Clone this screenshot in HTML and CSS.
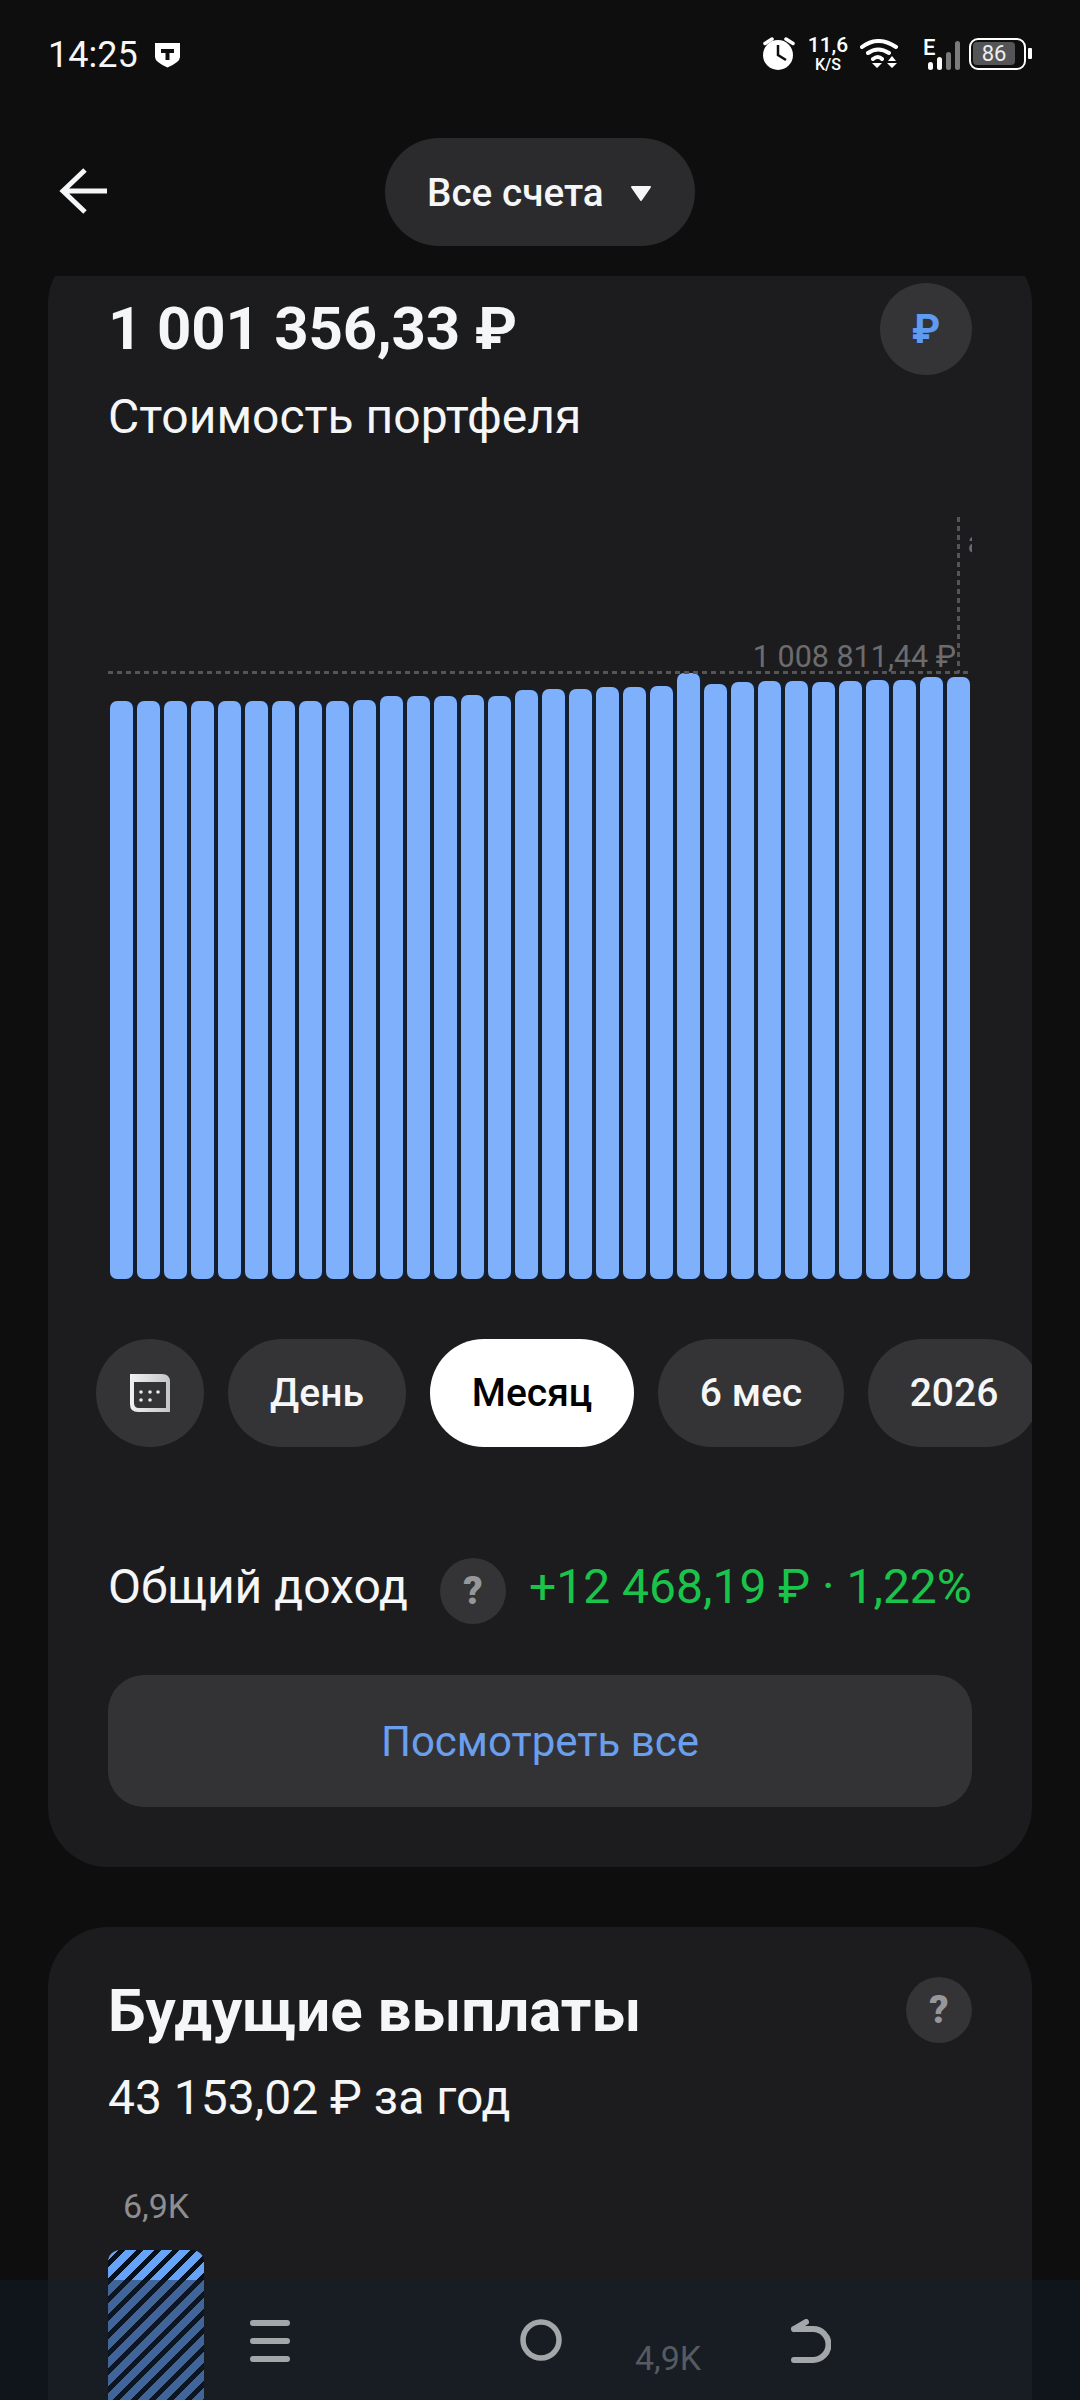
FILE: index.html
```html
<!DOCTYPE html>
<html lang="ru">
<head>
<meta charset="utf-8">
<title>Портфель</title>
<link rel="stylesheet" href="styles.css">
</head>
<body>
<div class="screen">
  <div class="statusbar">
    <div class="status-left">
      <span class="time">14:25</span>
      <svg class="shield" width="25" height="26" viewBox="0 0 25 26"><path fill="#fff" d="M0 1H25V15Q25 20 12.500 25.500Q0 20 0 15Z"/><path fill="#0e0e0f" d="M6 7H19V11H14.500V18H10.500V11H6Z"/></svg>
    </div>
    <div class="status-right">
      <svg width="34" height="34" viewBox="0 0 34 34"><circle cx="16" cy="18" r="15" fill="#fff"/><path d="M16 8V18L24 23" stroke="#0e0e0f" stroke-width="2.500" fill="none"/><path d="M3 6.500L10 2M24 2L31 6.500" stroke="#fff" stroke-width="3.500" stroke-linecap="round"/></svg>
      <div class="speed"><span class="speed-num">11,6</span><span class="speed-unit">K/S</span></div>
      <svg width="38" height="30" viewBox="0 0 38 30"><path d="M2 8Q18 -4 36 8M8 14Q18 7 29 14M13 20Q18 16 22 20" stroke="#fff" stroke-width="4" fill="none" stroke-linecap="round"/><path fill="#fff" d="M12 24H22L17 29ZM28 22L32 17L36 22ZM27 24H37L32 29Z"/></svg>
      <div class="signal">
        <span class="signal-e">E</span>
        <i class="sbar s1"></i><i class="sbar s2"></i><i class="sbar s3 dim"></i><i class="sbar s4 dim"></i>
      </div>
      <div class="battery"><span class="battery-fill">86</span></div>
      <i class="battery-cap"></i>
    </div>
  </div>

  <div class="appbar">
    <svg class="back" width="50" height="50" viewBox="0 0 50 50"><path d="M48 25H5M26 4L4 25L26 46" stroke="#f5f6f7" stroke-width="5" fill="none"/></svg>
    <div class="account-pill"><span>Все счета</span><svg class="pill-caret" width="22" height="17" viewBox="0 0 22 17"><path fill="#f5f6f7" stroke="#f5f6f7" stroke-width="2" stroke-linejoin="round" d="M2 2H20L11 15Z"/></svg></div>
  </div>

  <div class="scroller">
    <section class="card card-portfolio">
      <div class="head-row">
        <div class="amount">1 001 356,33 ₽</div>
        <div class="currency">₽</div>
      </div>
      <div class="caption">Стоимость портфеля</div>

      <div class="chart">
        <span class="cut-letter">а</span>
        <span class="vline"></span>
        <span class="max-label">1 008 811,44 ₽</span>
        <span class="hline"></span>
        <div class="bars">
          <i style="height:578px"></i><i style="height:578px"></i><i style="height:578px"></i><i style="height:578px"></i>
          <i style="height:578px"></i><i style="height:578px"></i><i style="height:578px"></i><i style="height:578px"></i>
          <i style="height:578px"></i><i style="height:579px"></i><i style="height:583px"></i><i style="height:583px"></i>
          <i style="height:583px"></i><i style="height:584px"></i><i style="height:583px"></i><i style="height:589px"></i>
          <i style="height:590px"></i><i style="height:590px"></i><i style="height:592px"></i><i style="height:592px"></i>
          <i style="height:593px"></i><i style="height:606px"></i><i style="height:595px"></i><i style="height:597px"></i>
          <i style="height:598px"></i><i style="height:598px"></i><i style="height:597px"></i><i style="height:598px"></i>
          <i style="height:599px"></i><i style="height:599px"></i><i style="height:602px"></i><i style="height:602px"></i>
        </div>
      </div>

      <div class="chips">
        <div class="chip chip-icon">
          <svg width="40" height="38" viewBox="0 0 40 38"><defs><linearGradient id="calTop" x1="0" x2="1" y1="0" y2="0"><stop offset="0" stop-color="#f0f1f2"/><stop offset="1" stop-color="#c4c5c7"/></linearGradient></defs><path fill="url(#calTop)" d="M0 0H32Q40 0 40 8V38H8Q0 38 0 30Z"/><path fill="#343436" d="M4 8H36V34H9Q4 34 4 29Z"/><g fill="#e8e9ea"><circle cx="11" cy="18" r="1.800"/><circle cx="20" cy="18" r="1.800"/><circle cx="28" cy="18" r="1.800"/><circle cx="11" cy="26" r="1.800"/><circle cx="20" cy="26" r="1.800"/></g></svg>
        </div>
        <div class="chip chip-day">День</div>
        <div class="chip chip-active">Месяц</div>
        <div class="chip chip-half">6 мес</div>
        <div class="chip chip-year">2026</div>
      </div>

      <div class="income-row">
        <span class="income-label">Общий доход</span>
        <span class="help">?</span>
        <span class="income-value">+12 468,19 ₽ · 1,22%</span>
      </div>
      <div class="see-all">Посмотреть все</div>
    </section>

    <section class="card card-future">
      <div class="future-head">
        <h2 class="future-title">Будущие выплаты</h2>
        <span class="help">?</span>
      </div>
      <div class="future-sub">43 153,02 ₽ за год</div>
      <div class="payouts">
        <div class="payout payout-tall">
          <span class="payout-label">6,9K</span>
          <div class="striped"></div>
        </div>
        <div class="payout payout-low">
          <span class="payout-label">4,9K</span>
        </div>
      </div>
    </section>
  </div>

  <nav class="navbar">
    <svg width="40" height="44" viewBox="0 0 40 44"><path d="M3 4H37M3 22H37M3 40H37" stroke="#a4a7aa" stroke-width="6" stroke-linecap="round"/></svg>
    <svg width="42" height="42" viewBox="0 0 42 42"><circle cx="21" cy="21" r="18" stroke="#a4a7aa" stroke-width="5.500" fill="none"/></svg>
    <svg width="40" height="44" viewBox="0 0 40 44"><path d="M3 41H22A15.500 15.500 0 0 0 22 10H3M15 3L3 10" stroke="#a4a7aa" stroke-width="6" fill="none" stroke-linecap="round" stroke-linejoin="round"/></svg>
  </nav>
</div>
</body>
</html>
```
FILE: styles.css
```css
* { box-sizing: border-box; }
html, body { margin: 0; padding: 0; background: #0e0e0f; }
.screen {
  position: relative;
  width: 1080px;
  height: 2400px;
  overflow: hidden;
  background: #0e0e0f;
  font-family: Roboto, "Liberation Sans", sans-serif;
  color: #f5f6f7;
  display: flex;
  flex-direction: column;
}
.statusbar {
  height: 110px;
  flex: none;
  padding: 0 48px 0 48px;
  display: flex;
  align-items: center;
  justify-content: space-between;
}
.status-left { display: flex; align-items: center; gap: 17px; }
.time { font-size: 36px; color: #f5f6f7; }
.status-right { display: flex; align-items: center; color: #fff; padding-bottom: 3px; }
.speed { display: flex; flex-direction: column; align-items: center; width: 36px; margin: 0 14px 0 14px; line-height: 1; font-weight: 500; }
.speed-num { font-size: 21px; }
.speed-unit { font-size: 16px; margin-top: 1px; }
.signal { display: flex; align-items: flex-end; gap: 4px; height: 32px; margin-left: 30px; position: relative; width: 32px; }
.signal-e { position: absolute; left: -5px; top: -1px; font-size: 22px; font-weight: 500; line-height: 1; }
.sbar { display: block; width: 5px; background: #fff; border-radius: 3px; }
.s1 { height: 8px; }
.s2 { height: 13px; }
.s3 { height: 18px; }
.s4 { height: 29px; }
.dim { background: #7b7b7c; }
.battery {
  width: 57px;
  height: 32px;
  border: 2px solid #fff;
  border-radius: 9px;
  margin-left: 9px;
  padding: 2px 9px 3px 2px;
  display: flex;
}
.battery-fill {
  flex: 1;
  background: #555557;
  border-radius: 4px;
  font-size: 22px;
  line-height: 23px;
  text-align: center;
  color: #eee;
}
.battery-cap { display: block; width: 4px; height: 11px; margin-left: 2px; background: #fff; border-radius: 1px; }

.appbar {
  position: relative;
  height: 166px;
  flex: none;
  display: flex;
  justify-content: center;
  padding-top: 28px;
}
.back { position: absolute; left: 59px; top: 56px; }
.account-pill {
  width: 310px;
  height: 108px;
  border-radius: 54px;
  background: #2b2b2d;
  display: flex;
  align-items: center;
  gap: 26px;
  padding-left: 42px;
  font-size: 38.7px;
  font-weight: 500;
}
.pill-caret { margin-top: 3px; }

.scroller {
  flex: 1;
  min-height: 0;
  overflow: hidden;
  padding: 0 48px;
}
.card {
  background: #1c1c1e;
  border-radius: 60px;
  padding: 0 60px;
}
.card-portfolio {
  margin-top: -32px;
  height: 1623px;
  padding-top: 39px;
}
.head-row { display: flex; justify-content: space-between; align-items: center; height: 92px; }
.amount { font-size: 60px; font-weight: 700; line-height: 70px; letter-spacing: -0.2px; }
.currency {
  width: 92px;
  height: 92px;
  border-radius: 50%;
  background: #343436;
  color: #5f9bf0;
  font-size: 40px;
  font-weight: 700;
  display: flex;
  align-items: center;
  justify-content: center;
}
.caption { font-size: 48px; line-height: 54px; margin-top: 15px; }

.chart {
  position: relative;
  height: 835px;
  overflow: hidden;
  display: flex;
  align-items: flex-end;
}
.bars { display: flex; gap: 4px; align-items: flex-end; height: 606px; padding-left: 2px; }
.bars i { display: block; width: 23px; background: #7eb0fb; border-radius: 7px; box-shadow: 2px 0 0 #0b2140; }
.bars i:last-child { box-shadow: none; }
.hline {
  position: absolute;
  left: 0;
  right: 0;
  bottom: 605px;
  height: 3px;
  background: repeating-linear-gradient(90deg, #555557 0 5px, transparent 5px 9px);
}
.vline {
  position: absolute;
  right: 12px;
  bottom: 606px;
  width: 3px;
  height: 156px;
  background: repeating-linear-gradient(180deg, #555557 0 5px, transparent 5px 9px);
}
.max-label { position: absolute; right: 16px; bottom: 604px; font-size: 30.5px; line-height: 36px; color: #6c6c6e; }
.cut-letter { position: absolute; right: -12px; bottom: 718px; font-size: 30.5px; line-height: 36px; color: #6c6c6e; }

.chips {
  display: flex;
  gap: 24px;
  margin: 60px -60px 0 -12px;
  overflow: hidden;
}
.chip {
  flex: none;
  height: 108px;
  border-radius: 54px;
  background: #343436;
  display: flex;
  align-items: center;
  justify-content: center;
  font-size: 39px;
  font-weight: 500;
}
.chip-icon { width: 108px; }
.chip-day { width: 178px; }
.chip-active { width: 204px; background: #fff; color: #000; }
.chip-half { width: 186px; }
.chip-year { width: 172px; }

.income-row { display: flex; align-items: center; margin-top: 111px; height: 66px; }
.income-label { font-size: 48px; width: 332px; margin-bottom: 10px; }
.help {
  flex: none;
  width: 66px;
  height: 66px;
  border-radius: 50%;
  background: #343436;
  color: #97979a;
  font-size: 38px;
  font-weight: 900;
  display: flex;
  align-items: center;
  justify-content: center;
}
.income-value { margin: 0 0 10px auto; font-size: 48px; color: #1ac44a; white-space: nowrap; }
.see-all {
  margin-top: 51px;
  height: 132px;
  border-radius: 36px;
  background: #333336;
  color: #6a9fee;
  font-size: 42px;
  display: flex;
  align-items: center;
  justify-content: center;
}

.card-future { margin-top: 60px; height: 700px; padding-top: 50px; }
.future-head { display: flex; justify-content: space-between; align-items: center; height: 66px; }
.future-title { margin: 0; font-size: 60px; font-weight: 700; }
.future-sub { font-size: 48px; line-height: 52px; margin-top: 29px; }
.payouts { display: flex; margin-top: 64px; }
.payout { display: flex; flex-direction: column; align-items: center; width: 96px; }
.payout-label { font-size: 34px; line-height: 36px; color: #8e8e90; }
.payout-low { margin: 152px 0 0 416px; }
.striped {
  width: 96px;
  height: 300px;
  margin-top: 26px;
  border-radius: 12px 12px 0 0;
  background: repeating-linear-gradient(135deg, #66a3fa 0 7.5px, #05101f 7.5px 12.7px);
}

.navbar {
  position: absolute;
  left: 0;
  right: 0;
  bottom: 0;
  height: 120px;
  background: rgba(20, 28, 41, .46);
  display: flex;
  align-items: flex-start;
  justify-content: space-between;
  padding: 39px 249px 0 250px;
}
```
